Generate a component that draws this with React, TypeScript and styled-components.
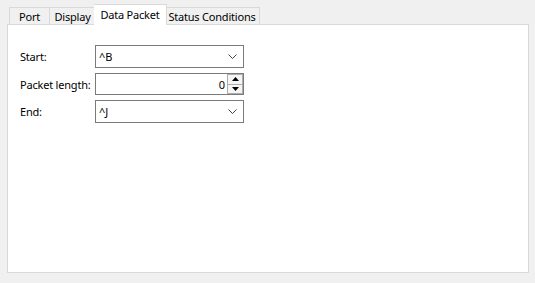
import React from "react";
import styled, { createGlobalStyle } from "styled-components";

const GlobalStyle = createGlobalStyle`
    html, body {
        margin: 0;
        padding: 0;
        background: #f0f0f0;
    }
    body {
        font-family: "Noto Sans", "Open Sans", sans-serif;
        font-size: 11px;
        color: #000;
    }
`;

const Window = styled.div`
    width: 535px;
    height: 283px;
    box-sizing: border-box;
    padding: 4px 6px 10px 7px;
    display: flex;
    flex-direction: column;
`;

const TabStrip = styled.div`
    display: flex;
    align-items: flex-end;
    padding-left: 2px;
    height: 21px;
    margin-bottom: -1px;
    position: relative;
    z-index: 1;
`;

const Tab = styled.div<{ $active?: boolean; $w: number }>`
    box-sizing: border-box;
    width: ${(p) => p.$w}px;
    height: ${(p) => (p.$active ? "21px" : "18px")};
    padding-bottom: ${(p) => (p.$active ? "2px" : "0")};
    margin: ${(p) => (p.$active ? "0 -2px" : "0")};
    border: 1px solid #d9d9d9;
    border-bottom: ${(p) => (p.$active ? "none" : "1px solid #d9d9d9")};
    background: ${(p) => (p.$active ? "#fff" : "#f0f0f0")};
    position: relative;
    z-index: ${(p) => (p.$active ? 2 : 1)};
    display: flex;
    align-items: center;
    justify-content: center;
    white-space: nowrap;
    letter-spacing: -0.2px;
    & + & {
        border-left: ${(p) => (p.$active ? "1px solid #d9d9d9" : "none")};
    }
`;

const Pane = styled.div`
    flex: 1;
    background: #fff;
    border: 1px solid #d9d9d9;
    padding: 20px 12px;
    display: flex;
    flex-direction: column;
    gap: 5px;
`;

const Row = styled.div`
    display: flex;
    align-items: center;
`;

const Label = styled.div`
    width: 75px;
    letter-spacing: -0.2px;
    white-space: nowrap;
`;

const Combo = styled.div`
    box-sizing: border-box;
    width: 149px;
    height: 23px;
    border: 1px solid #7a7a7a;
    background: #fff;
    display: flex;
    align-items: center;
    padding: 0 6px 0 3px;
`;

const ComboText = styled.div`
    flex: 1;
`;

const Spin = styled.div`
    box-sizing: border-box;
    width: 149px;
    height: 22px;
    border: 1px solid #7a7a7a;
    background: #fff;
    display: flex;
    align-items: stretch;
`;

const SpinValue = styled.div`
    flex: 1;
    display: flex;
    align-items: center;
    justify-content: flex-end;
    padding-right: 2px;
`;

const SpinButtons = styled.div`
    width: 16px;
    display: flex;
    flex-direction: column;
`;

const SpinButton = styled.div`
    flex: 1;
    border: 1px solid #adadad;
    background: #f5f5f5;
    display: flex;
    align-items: center;
    justify-content: center;
    & + & {
        border-top: none;
    }
`;

const Chevron = () => (
    <svg width="9" height="5" viewBox="0 0 9 5">
        <polyline points="0.5,0.5 4.5,4.5 8.5,0.5" fill="none" stroke="#404040" strokeWidth="1" />
    </svg>
);

const Arrow = ({ up }: { up?: boolean }) => (
    <svg width="7" height="4" viewBox="0 0 7 4">
        <polygon points={up ? "0,4 7,4 3.5,0" : "0,0 7,0 3.5,4"} fill="#000" />
    </svg>
);

const tabs = [
    { label: "Port", w: 41 },
    { label: "Display", w: 46 },
    { label: "Data Packet", w: 73 },
    { label: "Status Conditions", w: 95 },
];

export default function App() {
    return (
        <>
            <GlobalStyle />
            <Window>
                <TabStrip>
                    {tabs.map((t) => (
                        <Tab key={t.label} $w={t.w} $active={t.label === "Data Packet"}>
                            {t.label}
                        </Tab>
                    ))}
                </TabStrip>
                <Pane>
                    <Row>
                        <Label>Start:</Label>
                        <Combo>
                            <ComboText>^B</ComboText>
                            <Chevron />
                        </Combo>
                    </Row>
                    <Row>
                        <Label>Packet length:</Label>
                        <Spin>
                            <SpinValue>0</SpinValue>
                            <SpinButtons>
                                <SpinButton>
                                    <Arrow up />
                                </SpinButton>
                                <SpinButton>
                                    <Arrow />
                                </SpinButton>
                            </SpinButtons>
                        </Spin>
                    </Row>
                    <Row>
                        <Label>End:</Label>
                        <Combo>
                            <ComboText>^J</ComboText>
                            <Chevron />
                        </Combo>
                    </Row>
                </Pane>
            </Window>
        </>
    );
}
